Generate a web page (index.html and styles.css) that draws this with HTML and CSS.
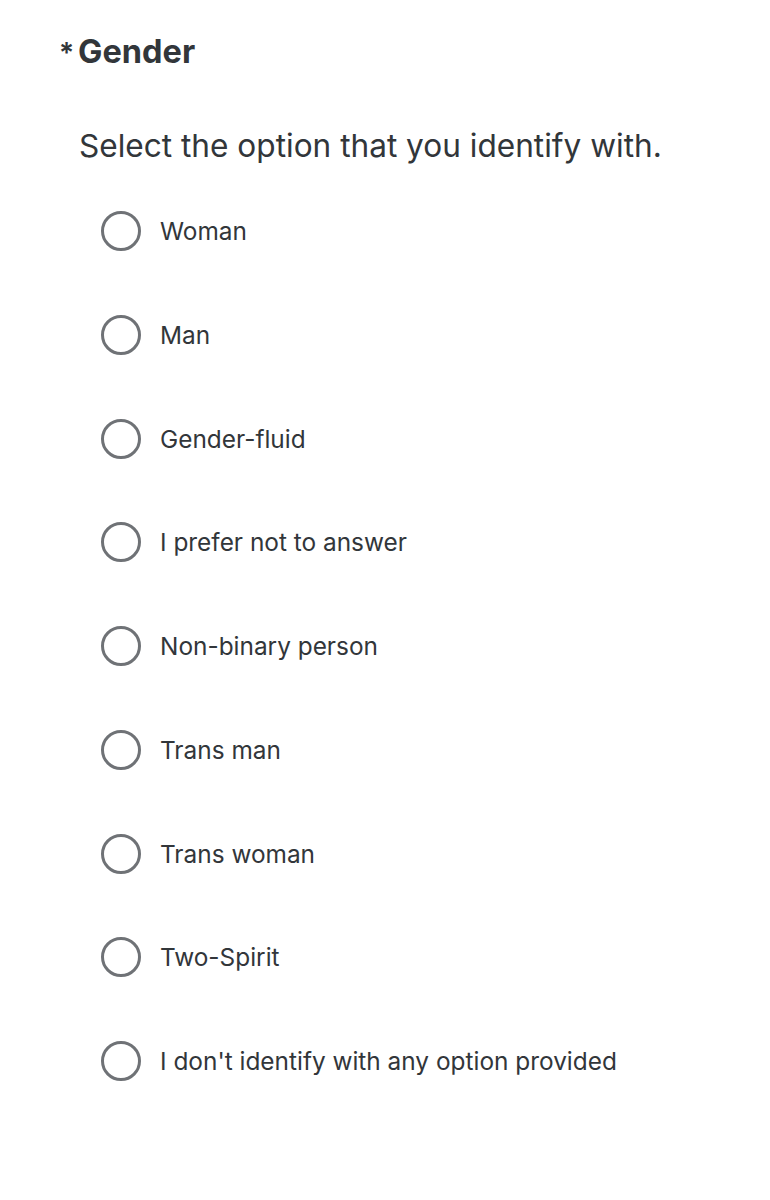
FILE: index.html
```html
<!DOCTYPE html>
<html lang="en">
<head>
<meta charset="utf-8">
<title>Gender</title>
<link rel="stylesheet" href="styles.css">
</head>
<body>
<main class="question">
  <h2 class="q-title"><span class="req">*</span>Gender</h2>
  <p class="q-text">Select the option that you identify with.</p>
  <div class="choices">
    <label class="choice"><span class="radio"></span><span class="lbl">Woman</span></label>
    <label class="choice"><span class="radio"></span><span class="lbl">Man</span></label>
    <label class="choice"><span class="radio"></span><span class="lbl">Gender-fluid</span></label>
    <label class="choice"><span class="radio"></span><span class="lbl">I prefer not to answer</span></label>
    <label class="choice"><span class="radio"></span><span class="lbl">Non-binary person</span></label>
    <label class="choice"><span class="radio"></span><span class="lbl">Trans man</span></label>
    <label class="choice"><span class="radio"></span><span class="lbl">Trans woman</span></label>
    <label class="choice"><span class="radio"></span><span class="lbl">Two-Spirit</span></label>
    <label class="choice"><span class="radio"></span><span class="lbl">I don't identify with any option provided</span></label>
  </div>
</main>
</body>
</html>
```
FILE: styles.css
```css
html, body {
  margin: 0;
  padding: 0;
  background: #ffffff;
}
body {
  font-family: Inter, "Liberation Sans", Arial, sans-serif;
  color: #32363a;
}
.question {
  padding: 34px 0 0 59px;
}
.q-title {
  margin: 0;
  font-size: 32.5px;
  line-height: 36px;
  font-weight: 700;
  display: flex;
  align-items: baseline;
}
.req {
  font-size: 28px;
  font-weight: 600;
  margin-right: 4px;
}
.q-text {
  margin: 55px 0 0 20px;
  font-size: 31.6px;
  line-height: 40px;
}
.choices {
  margin: 45px 0 0 42px;
  display: flex;
  flex-direction: column;
  gap: 63.75px;
}
.choice {
  display: flex;
  align-items: center;
  gap: 19px;
  height: 40px;
}
.radio {
  box-sizing: border-box;
  width: 40px;
  height: 40px;
  border: 3px solid #6f7276;
  border-radius: 50%;
  flex: none;
}
.lbl {
  font-size: 24.4px;
  line-height: 30px;
}
```
